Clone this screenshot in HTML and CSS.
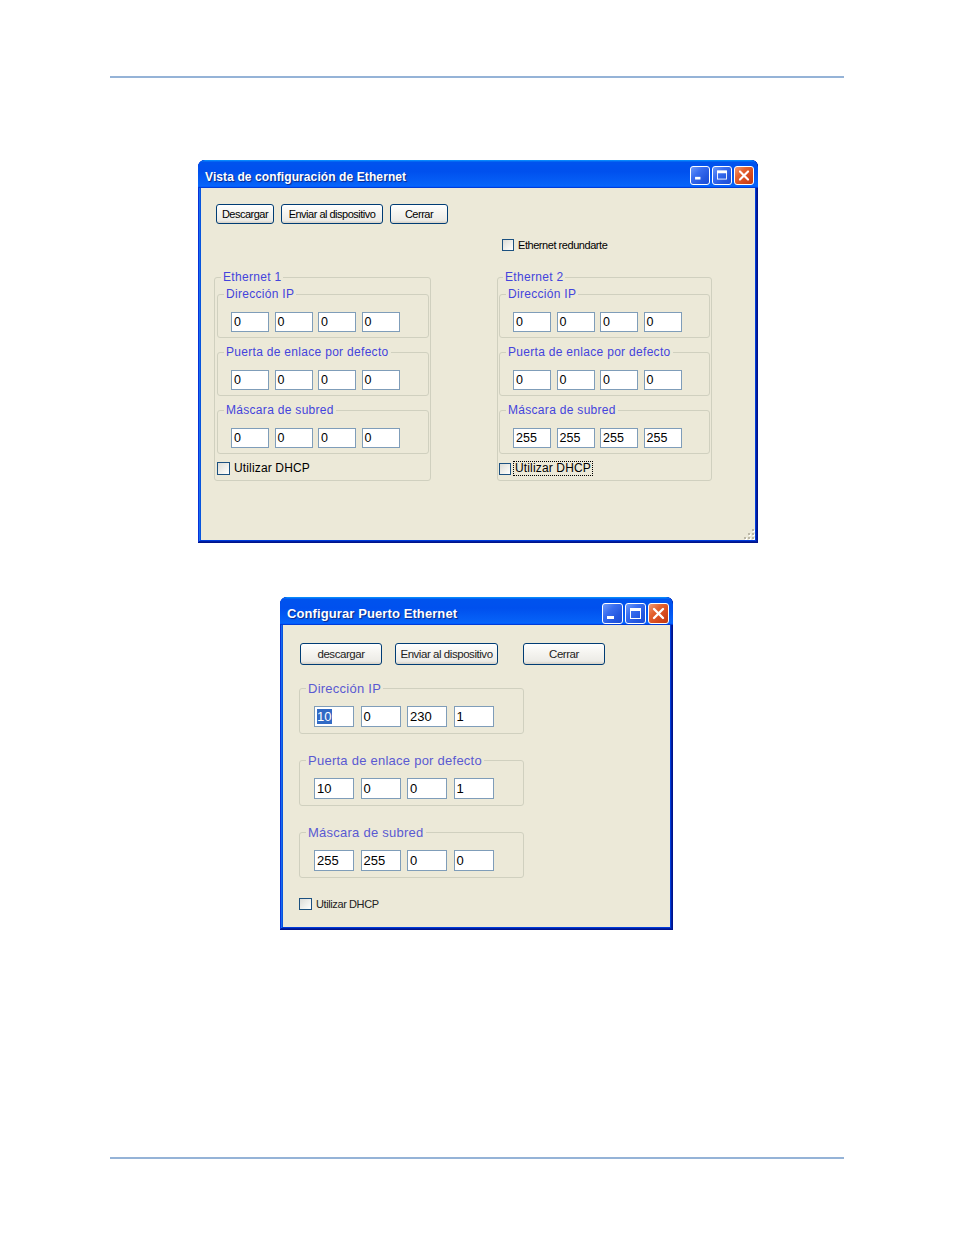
FILE: index.html
```html
<!DOCTYPE html>
<html lang="es">
<head>
<meta charset="utf-8">
<title>Configuración de Ethernet</title>
<link rel="stylesheet" href="styles.css">
</head>
<body>
<div class="page">
  <div class="rule rule-top"></div>

  <section class="window win1">
    <header class="titlebar">
      <span class="title">Vista de configuración de Ethernet</span>
      <div class="controls">
        <span class="ctl ctl-min"><svg viewBox="0 0 19 19"><rect x="4" y="11" width="6" height="3" fill="#fff"/></svg></span>
        <span class="ctl ctl-max"><svg viewBox="0 0 19 19"><rect x="4.5" y="4.5" width="10" height="9" fill="none" stroke="#fff" stroke-width="1"/><rect x="4" y="4" width="11" height="3" fill="#fff"/></svg></span>
        <span class="ctl ctl-close"><svg viewBox="0 0 19 19"><path d="M5 5 L14 14 M14 5 L5 14" stroke="#fff" stroke-width="2.4" stroke-linecap="round"/></svg></span>
      </div>
    </header>
    <div class="client">
      <div class="btn-row">
        <button class="btn b-sm">Descargar</button>
        <button class="btn b-lg">Enviar al dispositivo</button>
        <button class="btn b-sm">Cerrar</button>
      </div>
      <div class="check redund"><span class="box"></span><span class="lbl">Ethernet redundarte</span></div>
      <div class="cols">
        <fieldset class="eth eth1">
          <legend>Ethernet 1</legend>
          <fieldset class="grp">
            <legend>Dirección IP</legend>
            <div class="ip"><span class="field">0</span><span class="field">0</span><span class="field">0</span><span class="field">0</span></div>
          </fieldset>
          <fieldset class="grp">
            <legend>Puerta de enlace por defecto</legend>
            <div class="ip"><span class="field">0</span><span class="field">0</span><span class="field">0</span><span class="field">0</span></div>
          </fieldset>
          <fieldset class="grp">
            <legend>Máscara de subred</legend>
            <div class="ip"><span class="field">0</span><span class="field">0</span><span class="field">0</span><span class="field">0</span></div>
          </fieldset>
          <div class="check dhcp"><span class="box"></span><span class="lbl">Utilizar DHCP</span></div>
        </fieldset>
        <fieldset class="eth eth2">
          <legend>Ethernet 2</legend>
          <fieldset class="grp">
            <legend>Dirección IP</legend>
            <div class="ip"><span class="field">0</span><span class="field">0</span><span class="field">0</span><span class="field">0</span></div>
          </fieldset>
          <fieldset class="grp">
            <legend>Puerta de enlace por defecto</legend>
            <div class="ip"><span class="field">0</span><span class="field">0</span><span class="field">0</span><span class="field">0</span></div>
          </fieldset>
          <fieldset class="grp">
            <legend>Máscara de subred</legend>
            <div class="ip"><span class="field">255</span><span class="field">255</span><span class="field">255</span><span class="field">255</span></div>
          </fieldset>
          <div class="check dhcp"><span class="box"></span><span class="lbl focus">Utilizar DHCP</span></div>
        </fieldset>
      </div>
      <div class="grip">
        <svg viewBox="0 0 12 12" width="12" height="12">
          <g fill="#fff"><rect x="10" y="2" width="2" height="2"/><rect x="6" y="6" width="2" height="2"/><rect x="10" y="6" width="2" height="2"/><rect x="2" y="10" width="2" height="2"/><rect x="6" y="10" width="2" height="2"/><rect x="10" y="10" width="2" height="2"/></g>
          <g fill="#bcb8a6"><rect x="9" y="1" width="2" height="2"/><rect x="5" y="5" width="2" height="2"/><rect x="9" y="5" width="2" height="2"/><rect x="1" y="9" width="2" height="2"/><rect x="5" y="9" width="2" height="2"/><rect x="9" y="9" width="2" height="2"/></g>
        </svg>
      </div>
    </div>
  </section>

  <section class="window win2">
    <header class="titlebar">
      <span class="title">Configurar Puerto Ethernet</span>
      <div class="controls">
        <span class="ctl ctl-min"><svg viewBox="0 0 19 19"><rect x="4" y="12" width="7" height="3" fill="#fff"/></svg></span>
        <span class="ctl ctl-max"><svg viewBox="0 0 19 19"><rect x="4.5" y="4.5" width="10" height="10" fill="none" stroke="#fff" stroke-width="1"/><rect x="4" y="4" width="11" height="3" fill="#fff"/></svg></span>
        <span class="ctl ctl-close"><svg viewBox="0 0 19 19"><path d="M5 5 L14 14 M14 5 L5 14" stroke="#fff" stroke-width="2.4" stroke-linecap="round"/></svg></span>
      </div>
    </header>
    <div class="client">
      <div class="btn-row">
        <button class="btn b-sm">descargar</button>
        <button class="btn b-lg">Enviar al dispositivo</button>
        <button class="btn b-sm b-close">Cerrar</button>
      </div>
      <fieldset class="grp">
        <legend>Dirección IP</legend>
        <div class="ip"><span class="field"><span class="sel">10</span></span><span class="field">0</span><span class="field">230</span><span class="field">1</span></div>
      </fieldset>
      <fieldset class="grp">
        <legend>Puerta de enlace por defecto</legend>
        <div class="ip"><span class="field">10</span><span class="field">0</span><span class="field">0</span><span class="field">1</span></div>
      </fieldset>
      <fieldset class="grp">
        <legend>Máscara de subred</legend>
        <div class="ip"><span class="field">255</span><span class="field">255</span><span class="field">0</span><span class="field">0</span></div>
      </fieldset>
      <div class="check dhcp"><span class="box"></span><span class="lbl">Utilizar DHCP</span></div>
    </div>
  </section>

  <div class="rule rule-bottom"></div>
</div>
</body>
</html>
```
FILE: styles.css
```css
* { box-sizing: border-box; }
html, body { margin: 0; padding: 0; background: #fff; }
body {
  width: 954px;
  height: 1235px;
  overflow: hidden;
  font-family: "Liberation Sans", Arial, sans-serif;
  color: #000;
}
.page { display: flex; flex-direction: column; align-items: flex-start; padding-top: 76px; }

.rule { width: 734px; height: 2px; margin-left: 110px; background: #95b3d7; }
.rule-bottom { margin-top: 227px; }

/* ---------- XP window ---------- */
.window {
  display: flex;
  flex-direction: column;
  background: #0842d6;
  border-radius: 7px 7px 0 0;
  overflow: hidden;
  box-shadow: inset -1px -1px #00138c, inset 1px 1px #0831d9, inset -2px -2px #001ea0,
              inset 2px 2px #166aee, inset -3px -3px #003bda, inset 3px 3px #0855dd;
}
.win1 { width: 560px; height: 383px; margin-top: 82px; margin-left: 198px; }
.win2 { width: 393px; height: 333px; margin-top: 54px; margin-left: 280px; }

.titlebar {
  flex: none;
  height: 28px;
  display: flex;
  align-items: center;
  justify-content: space-between;
  padding: 3px 4px 0 7px;
  background: linear-gradient(180deg, #0997ff, #0053ee 8%, #0050ee 40%, #0662f8 88%, #0666fc 93%, #005bff 95%, #003dd7 96%, #003dd7);
  border-radius: 7px 7px 0 0;
}
.title {
  color: #fff;
  font-weight: bold;
  font-size: 12px;
  letter-spacing: 0.1px;
  text-shadow: 1px 1px 1px #0b2585;
  white-space: nowrap;
}
.win1 .title { padding-top: 2px; }
.win2 .titlebar { padding: 4px 4px 0 7px; }
.win2 .title { font-size: 13px; }

.controls { display: flex; gap: 2px; }
.ctl {
  width: 20px;
  height: 19px;
  border: 1px solid #fff;
  border-radius: 3px;
  display: flex;
  background: linear-gradient(135deg, #6e9bf9 0%, #3a6ef0 35%, #2458e0 70%, #1c4dd6 100%);
}
.ctl svg { width: 100%; height: 100%; display: block; }
.ctl-close { background: linear-gradient(135deg, #f29a74 0%, #e4622f 35%, #d4471c 70%, #c03a12 100%); }
.win2 .ctl { width: 21px; height: 21px; }

.client {
  flex: 1;
  margin: 0 3px 3px 3px;
  background: #ece9d8;
  display: flex;
  flex-direction: column;
  align-items: flex-start;
}

/* ---------- buttons ---------- */
.btn-row { display: flex; gap: 7px; }
.btn {
  margin: 0;
  padding: 0;
  font-family: "Liberation Sans", Arial, sans-serif;
  font-size: 11px;
  letter-spacing: -0.5px;
  color: #000;
  border: 1px solid #003c74;
  border-radius: 3px;
  background: linear-gradient(180deg, #ffffff 0%, #f6f5f1 40%, #ecebe6 86%, #d6d0c5 100%);
  display: flex;
  align-items: center;
  justify-content: center;
  white-space: nowrap;
  height: 20px;
}

/* ---------- checkboxes ---------- */
.check { display: flex; align-items: center; gap: 3px; white-space: nowrap; }
.box {
  flex: none;
  width: 12px;
  height: 12px;
  border: 1px solid #1c5180;
  background: linear-gradient(135deg, #dcdcd7 0%, #f2f2ee 60%, #ffffff 100%);
}

/* ---------- group boxes ---------- */
fieldset {
  margin: 0;
  border: 1px solid #d0d0bf;
  border-radius: 3px;
  min-width: 0;
}
legend { padding: 0 2px; margin-left: 6px; white-space: nowrap; }

.ip { display: flex; }
.field {
  display: block;
  background: #fff;
  border: 1px solid #7f9db9;
  font-size: 12.5px;
  padding-left: 2px;
  white-space: nowrap;
}

/* ---------- window 1 ---------- */
.win1 .client { padding: 16px 0 0 15px; }
.win1 .b-sm { width: 58px; }
.win1 .b-lg { width: 102px; }
.redund { margin: 15px 0 0 286px; height: 12px; gap: 4px; }
.redund .lbl { font-size: 11px; letter-spacing: -0.45px; }

.cols { display: flex; gap: 66px; margin: 19px 0 0 -2px; }
.eth { padding: 2px 1px 4px 2px; }
.eth1 { width: 217px; }
.eth2 { width: 215px; padding-left: 1px; }
.eth > legend { margin-left: 4px; }
.eth > legend, .win1 .grp > legend {
  font-size: 12px;
  line-height: 15px;
  letter-spacing: 0.3px;
  color: #4444dc;
}
.win1 .grp { padding: 10px 0 5px 0; margin-bottom: 7px; }
.win1 .grp > legend { margin-left: 6px; }
.win1 .ip { gap: 5.5px; margin-left: 13px; }
.win1 .field { width: 38px; height: 20px; line-height: 18px; }
.win1 .dhcp { height: 15px; margin-top: 0; }
.win1 .dhcp .box { width: 13px; height: 13px; }
.eth2 .dhcp .box { width: 12px; height: 12px; }
.win1 .dhcp .lbl { font-size: 12px; letter-spacing: 0.15px; line-height: 13px; padding: 0 1px; }
.eth2 .dhcp { gap: 2px; }
.focus { border: 1px dotted #000; }

.grip { margin-top: auto; align-self: flex-end; width: 12px; height: 12px; display: flex; }
.grip svg { display: block; }

/* ---------- window 2 ---------- */
.win2 .client { padding: 18px 0 0 16px; }
.win2 .btn-row { margin-left: 1px; gap: 13px; }
.win2 .btn { height: 22px; font-size: 11.5px; letter-spacing: -0.45px; color: #222; }
.win2 .b-sm { width: 82px; }
.win2 .b-lg { width: 103px; margin-right: 12px; }
.win2 .grp { width: 225px; padding: 9px 0 6px 0; margin-top: 15px; }
.win2 .grp + .grp { margin-top: 18px; }
.win2 .grp > legend {
  margin-left: 6px;
  font-size: 13px;
  line-height: 17px;
  letter-spacing: 0.25px;
  color: #5a5ad2;
}
.win2 .ip { gap: 6.5px; margin-left: 14px; }
.win2 .field { width: 40px; height: 21px; line-height: 19px; font-size: 13px; }
.sel { background: #316ac5; color: #fff; padding: 0 1px 0 0; }
.win2 .dhcp { margin-top: 19px; height: 14px; gap: 4px; }
.win2 .dhcp .box { width: 13px; height: 12px; }
.win2 .dhcp .lbl { font-size: 11px; letter-spacing: -0.4px; color: #222; }
```
